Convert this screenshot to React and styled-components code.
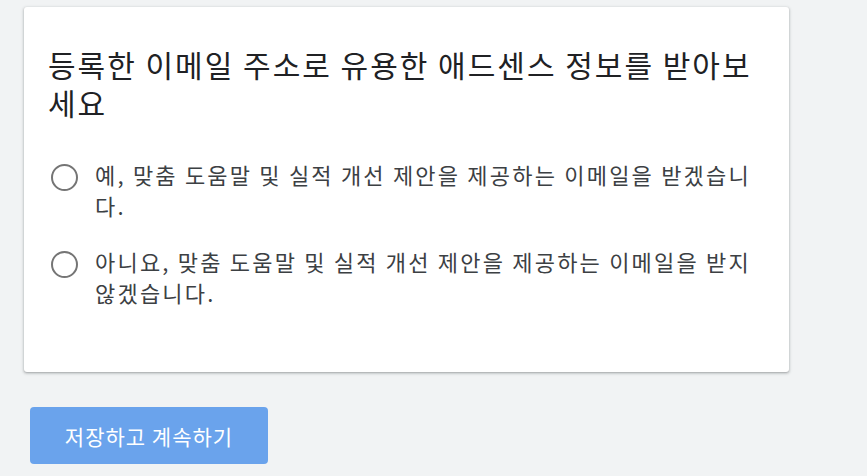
import React from 'react';
import styled, { createGlobalStyle } from 'styled-components';

const GlobalStyle = createGlobalStyle`
body {
  margin: 0;
  background: #f1f3f4;
  font-family: 'Noto Sans CJK KR', 'Noto Sans', sans-serif;
}
`

const Page = styled.div`
display: flex;
flex-direction: column;
align-items: flex-start;
padding: 7px 24px;
`

const Card = styled.div`
box-sizing: border-box;
width: 765px;
height: 365px;
padding: 38px 24px 24px;
background: #ffffff;
border-radius: 3px;
box-shadow: 0 1px 2px rgba(60, 64, 67, 0.3), 0 1px 3px 1px rgba(60, 64, 67, 0.15);
`

const Title = styled.h2`
margin: 0 0 38px;
font-size: 30px;
font-weight: 400;
line-height: 38px;
letter-spacing: 2px;
color: #202124;
`

const Options = styled.div`
display: flex;
flex-direction: column;
gap: 25px;
`

const Option = styled.label`
display: flex;
align-items: flex-start;
gap: 17px;
cursor: pointer;
`

const Radio = styled.span`
flex: none;
box-sizing: border-box;
width: 27px;
height: 27px;
margin: 5px 0 0 3px;
border: 2.5px solid #757575;
border-radius: 50%;
`

const OptionText = styled.span`
font-size: 22px;
line-height: 31px;
letter-spacing: 2.2px;
color: #3c4043;
`

const SaveButton = styled.button`
margin: 35px 0 0 6px;
width: 238px;
height: 57px;
border: none;
border-radius: 4px;
background: #6aa3ec;
color: #ffffff;
font-family: 'Noto Sans CJK KR', 'Noto Sans', sans-serif;
font-size: 21px;
letter-spacing: 1px;
cursor: pointer;
`

const options = [
  '예, 맞춤 도움말 및 실적 개선 제안을 제공하는 이메일을 받겠습니다.',
  '아니요, 맞춤 도움말 및 실적 개선 제안을 제공하는 이메일을 받지 않겠습니다.',
]

const App = () => {
  return (
    <Page>
      <GlobalStyle />
      <Card>
        <Title>등록한 이메일 주소로 유용한 애드센스 정보를 받아보세요</Title>
        <Options>
          {options.map((text) => (
            <Option key={text}>
              <Radio />
              <OptionText>{text}</OptionText>
            </Option>
          ))}
        </Options>
      </Card>
      <SaveButton>저장하고 계속하기</SaveButton>
    </Page>
  )
}

export default App
